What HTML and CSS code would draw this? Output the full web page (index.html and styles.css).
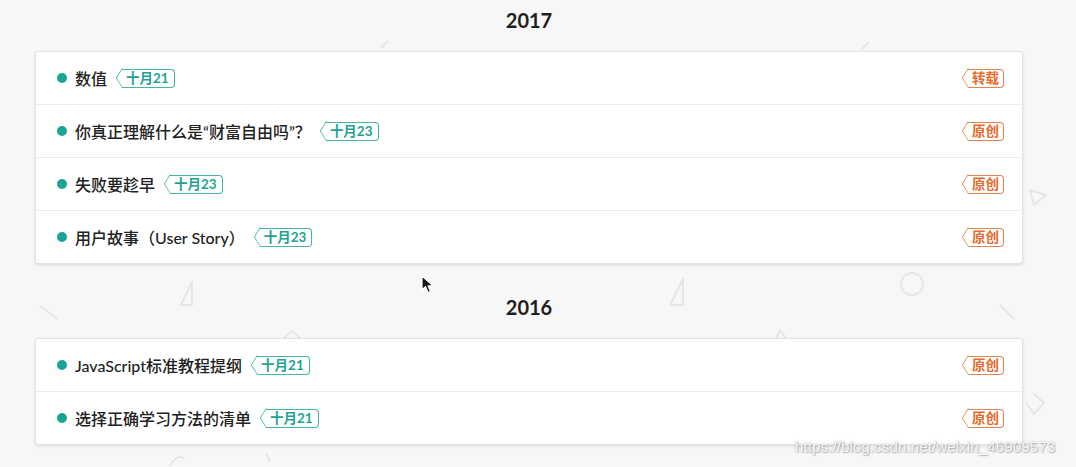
FILE: index.html
```html
<!DOCTYPE html>
<html>
<head>
  <meta http-equiv="Content-Type" content="text/html; charset=utf-8" />
  <title>归档</title>
<link rel="stylesheet" href="styles.css">
</head>
<body>

<!-- faint geometric pattern behind the archive -->
<svg class="bg-shapes" width="1076" height="467" viewBox="0 0 1076 467">
  <g fill="none" stroke="#e6e6e6" stroke-width="2" stroke-linejoin="round">
    <line x1="381" y1="48" x2="388" y2="41" />
    <line x1="862" y1="49" x2="869" y2="42" />
    <path d="M192 282 L181 305 L192 305 Z" />
    <line x1="40" y1="306" x2="58" y2="319" />
    <path d="M284 338 L292 331 L300 338" />
    <path d="M683 279 L670 305 L683 305 Z" />
    <circle cx="912" cy="284" r="11" />
    <line x1="1000" y1="305" x2="1014" y2="319" />
    <path d="M776 338 L780 330 L786 338" />
    <path d="M1030 190 L1046 195 L1034 205 Z" />
    <path d="M1033 393 L1044 403 L1034 414 L1026 403" />
    <path d="M170 466 Q176 454 184 458" />
    <line x1="266" y1="453" x2="270" y2="462" />
  </g>
</svg>

<div class="archive">

  <h2 class="year">2017</h2>
  <ul class="post-list">
    <li class="post">
      <span class="dot"></span>
      <span class="post-title">数值</span>
      <span class="tag tag-date">十月21</span>
      <span class="tag tag-type">转载</span>
    </li>
    <li class="post">
      <span class="dot"></span>
      <span class="post-title">你真正理解什么是“财富自由吗”？</span>
      <span class="tag tag-date">十月23</span>
      <span class="tag tag-type">原创</span>
    </li>
    <li class="post">
      <span class="dot"></span>
      <span class="post-title">失败要趁早</span>
      <span class="tag tag-date">十月23</span>
      <span class="tag tag-type">原创</span>
    </li>
    <li class="post">
      <span class="dot"></span>
      <span class="post-title">用户故事（User Story）</span>
      <span class="tag tag-date">十月23</span>
      <span class="tag tag-type">原创</span>
    </li>
  </ul>

  <h2 class="year">2016</h2>
  <ul class="post-list">
    <li class="post">
      <span class="dot"></span>
      <span class="post-title">JavaScript标准教程提纲</span>
      <span class="tag tag-date">十月21</span>
      <span class="tag tag-type">原创</span>
    </li>
    <li class="post">
      <span class="dot"></span>
      <span class="post-title">选择正确学习方法的清单</span>
      <span class="tag tag-date">十月21</span>
      <span class="tag tag-type">原创</span>
    </li>
  </ul>

</div>

<svg class="cursor" width="14" height="20" viewBox="0 0 14 20">
  <path d="M1 1 L1 15 L4.5 11.5 L7 17.5 L9.5 16.5 L7 10.8 L12 10.8 Z" fill="#111" stroke="#fff" stroke-width="1.2" stroke-linejoin="round" />
</svg>

<div class="watermark">https://blog.csdn.net/weixin_46909573</div>

</body>
</html>
```

FILE: styles.css
```css
html, body {
  margin: 0;
  padding: 0;
}
body {
  position: relative;
  width: 1076px;
  height: 467px;
  overflow: hidden;
  background-color: #f7f7f7;
  font-family: Lato, "Noto Sans CJK SC", sans-serif;
  color: #222;
}

.bg-shapes {
  position: absolute;
  left: 0;
  top: 0;
  z-index: 0;
}

.archive {
  position: relative;
  z-index: 1;
  width: 988px;
  margin-left: 35px;
}

.year {
  margin: 0;
  height: 40px;
  line-height: 40px;
  text-align: center;
  font-size: 20px;
  font-weight: 700;
  color: #1e1e1e;
}
.post-list + .year {
  margin-top: 23px;
}

.post-list {
  list-style: none;
  margin: 11px 0 0 0;
  padding: 0;
  background-color: #fff;
  border: 1px solid #e3e3e3;
  border-radius: 3px;
  box-shadow: 0 1px 3px rgba(0, 0, 0, 0.12);
}

.post {
  display: flex;
  align-items: center;
  height: 52px;
  padding: 0 18px 0 21px;
  border-bottom: 1px solid #ececec;
}
.post:last-child {
  border-bottom: none;
}

.dot {
  width: 10px;
  height: 10px;
  border-radius: 50%;
  background-color: #1aa592;
  margin-right: 8px;
  flex-shrink: 0;
}

.post-title {
  font-size: 16px;
  font-weight: 500;
  color: #222;
}

/* label with a pointed left end */
.tag {
  position: relative;
  display: inline-block;
  height: 17px;
  line-height: 17px;
  padding: 0 5px 0 4px;
  margin-left: 15px;
  font-size: 13.5px;
  font-weight: 700;
  border: 1.5px solid;
  border-left: none;
  border-radius: 0 4px 4px 0;
}
.tag::before {
  content: "";
  position: absolute;
  left: -7.07px;
  top: 1.43px;
  width: 14.14px;
  height: 14.14px;
  box-sizing: border-box;
  border-left: 1.5px solid;
  border-bottom: 1.5px solid;
  border-color: inherit;
  transform: scaleX(0.62) rotate(45deg);
}

.tag-date {
  color: #1fa390;
  border-color: #45b5a2;
}
.tag-type {
  margin-left: auto;
  color: #e56a2c;
  border-color: #e2854f;
  padding: 0 4px 0 4px;
}

.cursor {
  position: absolute;
  left: 421px;
  top: 275px;
  z-index: 3;
}

.watermark {
  position: absolute;
  left: 795px;
  top: 438px;
  z-index: 3;
  font-family: "Liberation Sans", Arial, sans-serif;
  font-size: 15.3px;
  color: rgba(255, 255, 255, 0.92);
  text-shadow: 0 0 2px rgba(110, 110, 110, 0.6), 1px 1px 1px rgba(140, 140, 140, 0.5);
}
```
